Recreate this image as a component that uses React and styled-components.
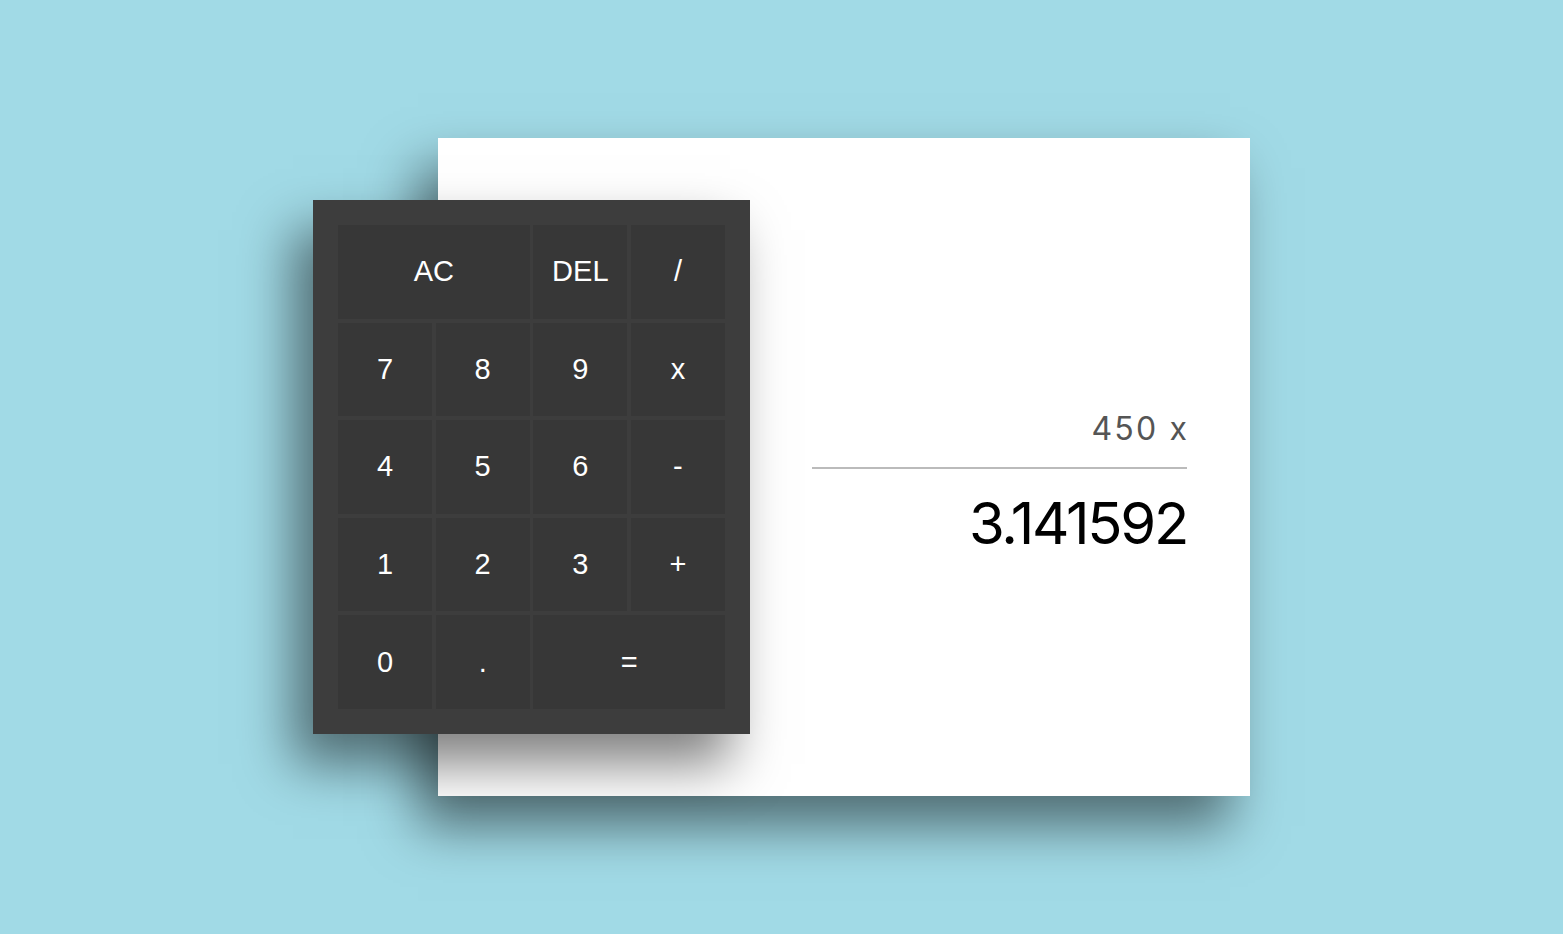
import React from "react";
import styled, { createGlobalStyle } from "styled-components";

const Global = createGlobalStyle`
  * { box-sizing: border-box; }
  html, body { margin: 0; padding: 0; }
  body {
    background: #a1dae6;
    font-family: "Liberation Sans", Arial, sans-serif;
  }
`;

const Page = styled.main`
  min-height: 100vh;
  display: flex;
  align-items: center;
  justify-content: center;
`;

const Stage = styled.div`
  display: flex;
  align-items: center;
`;

const shadow = "-20px 30px 50px rgba(0, 0, 0, 0.5)";

const Keypad = styled.div`
  position: relative;
  z-index: 2;
  width: 437px;
  height: 534px;
  padding: 25px;
  background: #3d3d3d;
  box-shadow: ${shadow};
  display: grid;
  grid-template-columns: repeat(4, 1fr);
  grid-template-rows: repeat(5, 1fr);
  gap: 4px 3.5px;
`;

const Key = styled.button`
  grid-column: span ${(p) => p.$span || 1};
  border: none;
  margin: 0;
  padding: 0;
  background: #373737;
  color: #ffffff;
  font-family: "Liberation Sans", Arial, sans-serif;
  font-size: 29px;
  cursor: pointer;
  outline: none;
`;

const Card = styled.section`
  position: relative;
  z-index: 1;
  margin-left: -312px;
  width: 812px;
  height: 658px;
  background: #ffffff;
  box-shadow: ${shadow};
  display: flex;
  align-items: center;
  justify-content: flex-end;
  padding: 31px 63px 0 0;
`;

const Display = styled.div`
  width: 375px;
  display: flex;
  flex-direction: column;
  align-items: stretch;
  text-align: right;
  font-family: "Inter", "Open Sans", sans-serif;
`;

const Previous = styled.div`
  color: #555555;
  font-size: 32px;
  line-height: 1;
  letter-spacing: 2.2px;
  padding-bottom: 22px;
  border-bottom: 2px solid #bbbbbb;
  & > span {
    margin-right: -2.2px;
  }
`;

const Current = styled.div`
  color: #000000;
  font-size: 58px;
  line-height: 1;
  padding-top: 25px;
  letter-spacing: -2.3px;
  & > span {
    margin-right: 0;
  }
`;

const keys = [
  { label: "AC", span: 2 },
  { label: "DEL" },
  { label: "/" },
  { label: "7" },
  { label: "8" },
  { label: "9" },
  { label: "x" },
  { label: "4" },
  { label: "5" },
  { label: "6" },
  { label: "-" },
  { label: "1" },
  { label: "2" },
  { label: "3" },
  { label: "+" },
  { label: "0" },
  { label: "." },
  { label: "=", span: 2 },
];

export default function App() {
  return (
    <>
      <Global />
      <Page>
        <Stage>
          <Keypad>
            {keys.map((k) => (
              <Key key={k.label} $span={k.span}>
                {k.label}
              </Key>
            ))}
          </Keypad>
          <Card>
            <Display>
              <Previous>
                <span>450 x</span>
              </Previous>
              <Current>
                <span>3.141592</span>
              </Current>
            </Display>
          </Card>
        </Stage>
      </Page>
    </>
  );
}
